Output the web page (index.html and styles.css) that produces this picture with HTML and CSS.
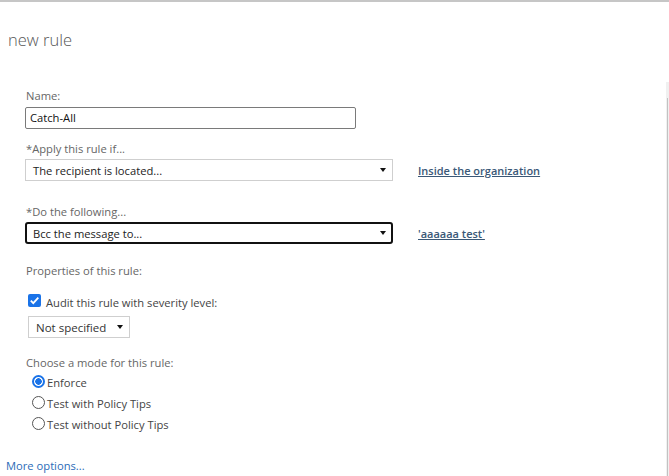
FILE: index.html
```html
<!DOCTYPE html>
<html>
<head>
<meta name="viewport" content="width=device-width, initial-scale=1">
<link rel="stylesheet" href="styles.css">
</head>
<body>

<div class="topline"></div>
<div class="scrolltrack"><div class="scrollthumb"></div></div>

<h1 class="title">new rule</h1>

<div class="form">
  <div class="label">Name:</div>
  <div class="textbox">Catch-All</div>

  <div class="label gap-sm">*Apply this rule if...</div>
  <div class="row">
    <div class="dropdown wide">
      <span>The recipient is located...</span>
      <span class="arrow"></span>
    </div>
    <a class="link">Inside the organization</a>
  </div>

  <div class="label gap-lg">*Do the following...</div>
  <div class="row">
    <div class="dropdown wide focused">
      <span>Bcc the message to...</span>
      <span class="arrow"></span>
    </div>
    <a class="link">'aaaaaa test'</a>
  </div>

  <div class="label gap-md">Properties of this rule:</div>

  <div class="check-row">
    <span class="checkbox">
      <svg width="11" height="11" viewBox="0 0 11 11"><path d="M1.8 5.6 L4.3 8.1 L9.3 2.6" fill="none" stroke="#fff" stroke-width="1.8"/></svg>
    </span>
    <span class="dark">Audit this rule with severity level:</span>
  </div>
  <div class="dropdown small">
    <span>Not specified</span>
    <span class="arrow"></span>
  </div>

  <div class="label gap-mode">Choose a mode for this rule:</div>
  <div class="radios">
    <div class="radio-row"><span class="radio on"></span><span class="dark">Enforce</span></div>
    <div class="radio-row"><span class="radio"></span><span class="dark">Test with Policy Tips</span></div>
    <div class="radio-row"><span class="radio"></span><span class="dark">Test without Policy Tips</span></div>
  </div>
</div>

<a class="more">More options...</a>

</body>
</html>
```

FILE: styles.css
```css
body {
  margin: 0;
  font-family: "Open Sans", "Noto Sans", sans-serif;
  font-size: 11.2px;
  color: #666;
  background: #fff;
  overflow: hidden;
}

.topline {
  height: 2px;
  background-color: #c6c6c6;
}

.scrolltrack {
  position: absolute;
  right: 0;
  top: 82px;
  bottom: 0;
  width: 3px;
  background-color: #f0f0f0;
}

.scrollthumb {
  margin-top: 16px;
  margin-left: 1px;
  width: 1px;
  height: 400px;
  background-color: #c2c2c2;
}

.title {
  margin: 26px 0 0 8px;
  font-size: 16.5px;
  font-weight: 300;
  line-height: 24px;
  color: #555;
}

.form {
  padding: 36px 0 0 25px;
}

.label {
  line-height: 16px;
  padding-left: 1px;
}

.gap-sm { margin-top: 12px; }
.gap-md { margin-top: 19px; }
.gap-lg { margin-top: 23px; }
.gap-mode { margin-top: 17px; }

.textbox {
  box-sizing: border-box;
  margin-top: 3px;
  width: 331px;
  height: 22px;
  border: 1px solid #7a7a7a;
  border-radius: 2px;
  padding: 0 4px;
  line-height: 20px;
  color: #111;
}

.row {
  display: flex;
  align-items: center;
  margin-top: 2px;
}

.dropdown {
  box-sizing: border-box;
  display: flex;
  align-items: center;
  justify-content: space-between;
  height: 22px;
  border: 1px solid #cfcfcf;
  padding: 0 6px 0 7px;
  color: #222;
}

.dropdown.wide { width: 368px; }

.dropdown.focused {
  border: 2px solid #111;
  border-radius: 3px;
  padding: 0 5px 0 6px;
}

.dropdown.small {
  width: 102px;
  margin: 6px 0 0 3px;
  padding: 0 6px 0 7px;
  color: #333;
  font-size: 11.5px;
}

.arrow {
  width: 0;
  height: 0;
  border-left: 3.5px solid transparent;
  border-right: 3.5px solid transparent;
  border-top: 4px solid #111;
}

.link {
  margin-left: 25px;
  color: #3a5877;
  font-weight: 600;
  font-size: 11px;
  text-decoration: underline;
}

.check-row {
  display: flex;
  align-items: center;
  gap: 5px;
  margin: 15px 0 0 3px;
  height: 16px;
}

.checkbox {
  box-sizing: border-box;
  display: flex;
  align-items: center;
  justify-content: center;
  width: 13px;
  height: 13px;
  border-radius: 2px;
  background-color: #1a73e8;
  margin-top: -3px;
}

.dark {
  color: #444;
}

.radios {
  margin: 1px 0 0 7px;
}

.radio-row {
  display: flex;
  align-items: center;
  gap: 2px;
  height: 21px;
}

.radio {
  box-sizing: border-box;
  width: 13px;
  height: 13px;
  border: 1px solid #555;
  border-radius: 50%;
  margin-top: -2px;
}

.radio.on {
  border: 2px solid #1a73e8;
  background: radial-gradient(circle, #1a73e8 0 3px, #fff 3.5px);
}

.more {
  position: absolute;
  left: 6px;
  top: 458px;
  line-height: 16px;
  color: #2b6cb8;
}
```
